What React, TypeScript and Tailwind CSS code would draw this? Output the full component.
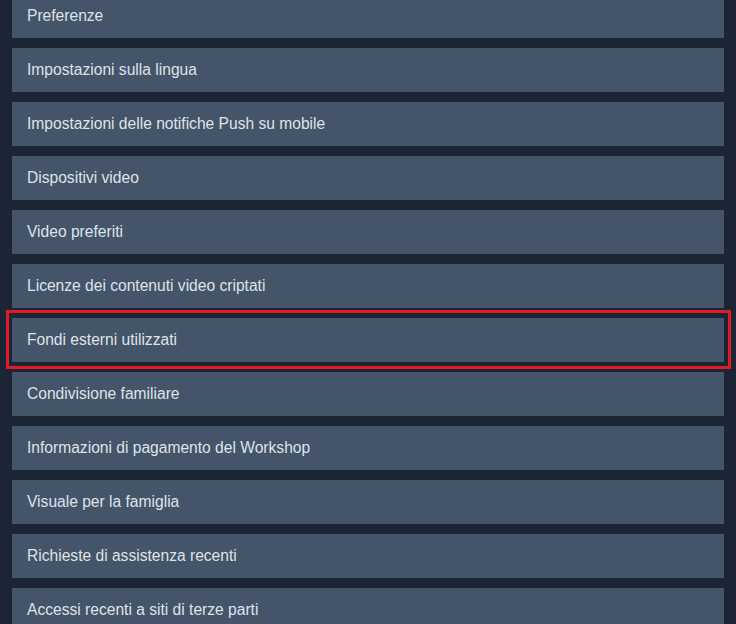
import React from "react";

const items = [
  "Preferenze",
  "Impostazioni sulla lingua",
  "Impostazioni delle notifiche Push su mobile",
  "Dispositivi video",
  "Video preferiti",
  "Licenze dei contenuti video criptati",
  "Fondi esterni utilizzati",
  "Condivisione familiare",
  "Informazioni di pagamento del Workshop",
  "Visuale per la famiglia",
  "Richieste di assistenza recenti",
  "Accessi recenti a siti di terze parti",
];

export default function App() {
  return (
    <div
      className="w-[736px] h-[624px] overflow-hidden bg-[#1b2536]"
      style={{ fontFamily: '"Liberation Sans", Arial, sans-serif' }}
    >
      <div className="flex flex-col gap-[10px] pl-[12px] pr-[12px] mt-[-6px]">
        {items.map((t, i) =>
          i === 6 ? (
            <div key={t} className="ml-[-6px] mr-[-7px] mt-[-8px] mb-[-7px] border-[3px] border-[#e01b24] pl-[3px] pr-[4px] pt-[5px] pb-[4px]">
              <div className="h-[44px] bg-[#445469] flex items-center pl-[15px] text-[15.6px] text-[#dfe3e8]">
                {t}
              </div>
            </div>
          ) : (
            <div key={t} className="h-[44px] bg-[#445469] flex items-center pl-[15px] text-[15.6px] text-[#dfe3e8]">
              {t}
            </div>
          )
        )}
      </div>
    </div>
  );
}
